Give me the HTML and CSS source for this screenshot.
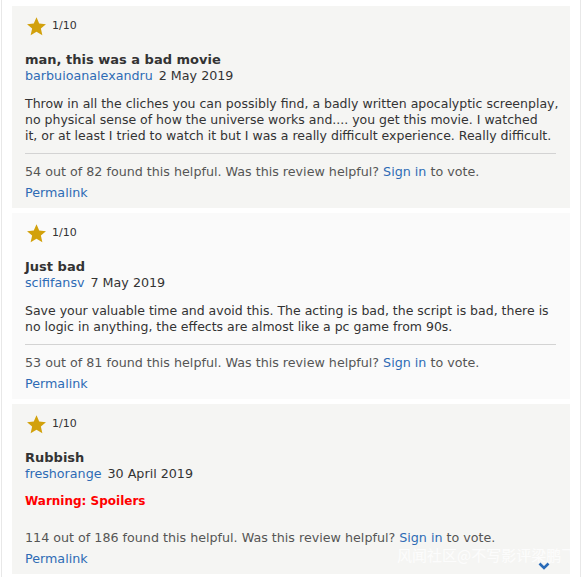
FILE: index.html
```html
<!DOCTYPE html>
<html>
<head>
<meta charset="utf-8">
<link rel="stylesheet" href="styles.css">
</head>
<body>
<div class="frame">
  <div class="list">
    <div class="card">
      <div class="rating">
        <svg class="star" viewBox="0 0 24 24" width="21" height="21"><polygon points="12,1.5 15.1,8.6 22.8,9.3 17,14.4 18.7,22 12,18 5.3,22 7,14.4 1.2,9.3 8.9,8.6"/></svg>
        <span class="score">1/10</span>
      </div>
      <div class="title">man, this was a bad movie</div>
      <div class="meta"><a class="link">barbuioanalexandru</a><span class="date">2 May 2019</span></div>
      <div class="body">Throw in all the cliches you can possibly find, a badly written apocalyptic screenplay, no physical sense of how the universe works and.... you get this movie. I watched<br>it, or at least I tried to watch it but I was a really difficult experience. Really difficult.</div>
      <div class="rule"></div>
      <div class="helpful">54 out of 82 found this helpful. Was this review helpful? <a class="link">Sign in</a> to vote.</div>
      <div class="perma"><a class="link">Permalink</a></div>
    </div>
    <div class="card light">
      <div class="rating">
        <svg class="star" viewBox="0 0 24 24" width="21" height="21"><polygon points="12,1.5 15.1,8.6 22.8,9.3 17,14.4 18.7,22 12,18 5.3,22 7,14.4 1.2,9.3 8.9,8.6"/></svg>
        <span class="score">1/10</span>
      </div>
      <div class="title">Just bad</div>
      <div class="meta"><a class="link">scififansv</a><span class="date">7 May 2019</span></div>
      <div class="body">Save your valuable time and avoid this. The acting is bad, the script is bad, there is no logic in anything, the effects are almost like a pc game from 90s.</div>
      <div class="rule"></div>
      <div class="helpful">53 out of 81 found this helpful. Was this review helpful? <a class="link">Sign in</a> to vote.</div>
      <div class="perma"><a class="link">Permalink</a></div>
    </div>
    <div class="card">
      <div class="rating">
        <svg class="star" viewBox="0 0 24 24" width="21" height="21"><polygon points="12,1.5 15.1,8.6 22.8,9.3 17,14.4 18.7,22 12,18 5.3,22 7,14.4 1.2,9.3 8.9,8.6"/></svg>
        <span class="score">1/10</span>
      </div>
      <div class="title">Rubbish</div>
      <div class="meta"><a class="link">freshorange</a><span class="date">30 April 2019</span></div>
      <div class="spoiler">Warning: Spoilers</div>
      <div class="helpful spaced">114 out of 186 found this helpful. Was this review helpful? <a class="link">Sign in</a> to vote.</div>
      <div class="perma"><a class="link">Permalink</a></div>
    </div>
  </div>
  <div class="watermark">风闻社区@不写影评梁鹏飞</div>
  <svg class="chevron" viewBox="0 0 12 8" width="12" height="8"><polyline points="1.5,1.5 6,6 10.5,1.5"/></svg>
</div>
</body>
</html>
```

FILE: styles.css
```css
html, body {
  margin: 0;
  padding: 0;
  background: #ffffff;
}
body {
  font-family: "DejaVu Sans", Verdana, sans-serif;
  font-size: 12.7px;
  line-height: 16px;
  color: #333333;
}
.frame {
  position: relative;
  margin-left: 1px;
  width: 580px;
  height: 577px;
  overflow: hidden;
  border-left: 1px solid #e8e8e8;
  border-right: 1px solid #e8e8e8;
  box-sizing: border-box;
}
.list {
  display: flex;
  flex-direction: column;
  gap: 5px;
  padding: 6px 0 0 10px;
}
.card {
  width: 558px;
  box-sizing: border-box;
  background: #f5f5f3;
  padding: 10px 14px 7px 13px;
}
.card.light {
  background: #fafafa;
}
.rating {
  display: flex;
  align-items: center;
  height: 20px;
  padding-left: 1px;
}
.star {
  fill: #d2a10c;
  display: block;
}
.score {
  font-size: 11px;
  margin-left: 5px;
  color: #333;
}
.title {
  margin-top: 16px;
  font-size: 13px;
  font-weight: bold;
  color: #333;
}
.meta .date {
  margin-left: 6px;
}
.link {
  color: #2e6bb5;
  text-decoration: none;
}
.body {
  margin-top: 12px;
  margin-right: -11px;
  font-size: 12.5px;
}
.rule {
  margin-top: 9px;
  height: 1px;
  background: #d3d3d3;
}
.helpful {
  margin-top: 10px;
  color: #555;
}
.helpful.spaced {
  margin-top: 21px;
}
.perma {
  margin-top: 5px;
}
.spoiler {
  margin-top: 11px;
  font-size: 12px;
  color: #ff0000;
  font-weight: bold;
}
.watermark {
  position: absolute;
  left: 395px;
  top: 546px;
  font-family: "Noto Sans CJK SC", sans-serif;
  font-size: 15px;
  line-height: 17px;
  color: rgba(255, 255, 255, 0.8);
  white-space: nowrap;
}
.chevron {
  position: absolute;
  left: 536px;
  top: 562px;
  fill: none;
  stroke: #2a6bb8;
  stroke-width: 2.6;
}
```
